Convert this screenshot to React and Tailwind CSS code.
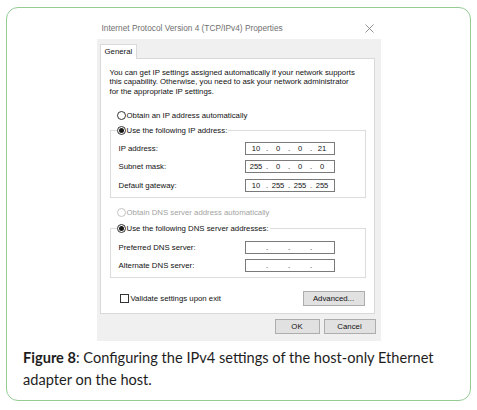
import React from "react";

const dlg = { fontFamily: '"Liberation Sans", Arial, sans-serif' };

function Radio({ checked, disabled }) {
  return (
    <span
      className={`inline-flex items-center justify-center w-[9px] h-[9px] rounded-full border bg-white shrink-0 ${
        disabled ? "border-[#c4c4c4]" : "border-[#333333]"
      }`}
    >
      {checked && <span className="w-[5px] h-[5px] rounded-full bg-[#1a1a1a]" />}
    </span>
  );
}

function IpBox({ parts }) {
  return (
    <div className="w-[90px] h-[13px] border border-[#7a7a7a] bg-white flex items-center pl-[1px] text-[7.6px] text-[#111]">
      {parts.map((p, i) => (
        <React.Fragment key={i}>
          <span className="w-[19px] text-center">{p}</span>
          {i < 3 && <span className="w-[3px] text-center">.</span>}
        </React.Fragment>
      ))}
    </div>
  );
}

function Row({ label, parts }) {
  return (
    <div className="flex items-center justify-between h-[13px] pl-[2px] pr-[30px]">
      <span>{label}</span>
      <IpBox parts={parts} />
    </div>
  );
}

export default function App() {
  return (
    <div className="w-[477px] h-[410px] bg-white pt-[7px] px-[6px]">
      <div className="h-[394px] border border-[#94cc94] rounded-[12px] flex flex-col">
        <div className="self-center w-[284px] mt-[9px] text-[7.8px] text-[#111]" style={dlg}>
          <div className="h-[22px] flex items-center justify-between pl-[5px] pr-[7px]">
            <span className="text-[8.3px] text-[#707070]">Internet Protocol Version 4 (TCP/IPv4) Properties</span>
            <svg width="9" height="9" viewBox="0 0 9 9">
              <path d="M0.5 0.5 L8.5 8.5 M8.5 0.5 L0.5 8.5" stroke="#777" strokeWidth="0.8" fill="none" />
            </svg>
          </div>
          <div className="h-[302px] bg-[#f0f0f0] pt-[5px] pl-[3px] flex flex-col">
            <div className="relative z-10 w-[37px] h-[15px] -mb-[1px] bg-white border border-b-0 border-[#d9d9d9] flex items-center pl-[4px]">
              General
            </div>
            <div className="w-[275px] h-[256px] bg-white border border-[#d9d9d9] pt-[9px] pl-[9px] pr-[8px] flex flex-col">
              <p className="leading-[9.3px] whitespace-nowrap">
                You can get IP settings assigned automatically if your network supports
                <br />
                this capability. Otherwise, you need to ask your network administrator
                <br />
                for the appropriate IP settings.
              </p>
              <div className="mt-[15px] h-[10px] flex items-center gap-[1px] pl-[7px]">
                <Radio />
                <span>Obtain an IP address automatically</span>
              </div>
              <fieldset className="mt-[5px] border border-[#dcdcdc] pl-[6px] pb-[5px] h-[72px]">
                <legend className="flex items-center gap-[1px] h-[10px] pr-[1px]">
                  <Radio checked />
                  <span>Use the following IP address:</span>
                </legend>
                <div className="mt-[6px] flex flex-col gap-[5.5px]">
                  <Row label="IP address:" parts={["10", "0", "0", "21"]} />
                  <Row label="Subnet mask:" parts={["255", "0", "0", "0"]} />
                  <Row label="Default gateway:" parts={["10", "255", "255", "255"]} />
                </div>
              </fieldset>
              <div className="mt-[10px] h-[10px] flex items-center gap-[1px] pl-[7px] text-[#a3a3a3]">
                <Radio disabled />
                <span>Obtain DNS server address automatically</span>
              </div>
              <fieldset className="mt-[6px] border border-[#dcdcdc] pl-[6px] pb-[5px] h-[54px]">
                <legend className="flex items-center gap-[1px] h-[10px] pr-[1px]">
                  <Radio checked />
                  <span>Use the following DNS server addresses:</span>
                </legend>
                <div className="mt-[7px] flex flex-col gap-[5px]">
                  <Row label="Preferred DNS server:" parts={["", "", "", ""]} />
                  <Row label="Alternate DNS server:" parts={["", "", "", ""]} />
                </div>
              </fieldset>
              <div className="mt-[13px] flex items-center justify-between pl-[10px] pr-[1px]">
                <div className="flex items-center gap-[2px]">
                  <span className="w-[9px] h-[9px] border border-[#333] bg-white" />
                  <span>Validate settings upon exit</span>
                </div>
                <div className="w-[62px] h-[15px] bg-[#e1e1e1] border border-[#adadad] flex items-center justify-center">
                  Advanced...
                </div>
              </div>
            </div>
            <div className="mt-[5px] flex justify-end gap-[4px] pr-[5px]">
              <div className="w-[45px] h-[15px] bg-[#e1e1e1] border border-[#adadad] flex items-center justify-center">
                OK
              </div>
              <div className="w-[52px] h-[15px] bg-[#e1e1e1] border border-[#adadad] flex items-center justify-center">
                Cancel
              </div>
            </div>
          </div>
        </div>
        <p
          className="mt-[6px] pl-[16px] pr-[10px] text-[14.6px] leading-[22px] text-[#1e1e1e]"
          style={{ fontFamily: 'Lato, "Liberation Sans", sans-serif' }}
        >
          <span className="font-bold">Figure 8</span>: Configuring the IPv4 settings of the host-only Ethernet
          <br />
          adapter on the host.
        </p>
      </div>
    </div>
  );
}
